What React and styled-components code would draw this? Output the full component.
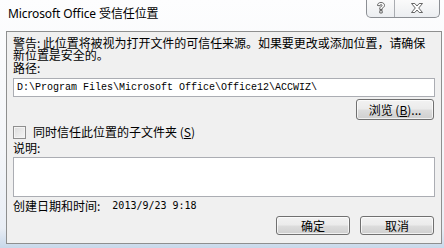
import React from 'react';
import styled, { createGlobalStyle } from 'styled-components';

const GlobalStyle = createGlobalStyle`
  html, body {
    margin: 0;
    padding: 0;
    width: 444px;
    height: 248px;
    overflow: hidden;
    background: #eef2f7;
  }
`;

const cjk = `"Noto Sans CJK SC", "Noto Sans", sans-serif`;

const Window = styled.div`
  width: 444px;
  height: 248px;
  display: flex;
  flex-direction: column;
  background: linear-gradient(180deg, #fdfdfe 0%, #f4f6f9 60%, #e9eef5 92%, #c8d8ea 100%);
  font-family: ${cjk};
  color: #000;
`;

const TitleBar = styled.div`
  height: 31px;
  display: flex;
  align-items: flex-start;
  justify-content: space-between;
  padding-left: 8px;
  padding-right: 4px;
`;

const Title = styled.div`
  font-family: "Noto Sans", "Noto Sans CJK SC", sans-serif;
  font-size: 12px;
  line-height: 14px;
  padding-top: 7px;
  letter-spacing: -0.1px;
`;

const CaptionGroup = styled.div`
  display: flex;
  height: 18px;
  margin-top: -1px;
  border: 1px solid #8c8f94;
  border-top: none;
  border-radius: 0 0 5px 5px;
  background: linear-gradient(180deg, #fbfbfb, #eceef1);
  overflow: hidden;
`;

const CaptionButton = styled.div`
  width: ${(p) => p.w}px;
  display: flex;
  align-items: center;
  justify-content: center;
  & + & {
    border-left: 1px solid #a9acb1;
  }
`;

const Panel = styled.div`
  flex: 1;
  margin: 0 2px 4px 6px;
  border: 1px solid #8e8f8f;
  background: #f0f0f0;
  padding: 5px 6px 0 6px;
  display: flex;
  flex-direction: column;
  font-size: 12px;
  line-height: 12px;
`;

const Text = styled.div`
  font-size: 12px;
  line-height: 12px;
  margin-top: ${(p) => p.mt || 0}px;
  white-space: nowrap;
`;

const Warning = styled.div`
  font-size: 12px;
  line-height: 12px;
  white-space: nowrap;
  letter-spacing: -0.05px;
`;

const Field = styled.div`
  height: 19px;
  margin-top: ${(p) => p.mt || 0}px;
  box-sizing: border-box;
  border: 1px solid #abadb3;
  background: #fff;
  font-family: "Liberation Mono", monospace;
  font-size: 10px;
  line-height: 17px;
  padding-left: 3px;
  color: #000;
`;

const Memo = styled(Field)`
  height: 40px;
`;

const Button = styled.div`
  box-sizing: border-box;
  width: ${(p) => p.w}px;
  height: ${(p) => p.h}px;
  border: 1px solid #707070;
  border-radius: 3px;
  background: linear-gradient(180deg, #f2f2f2 0%, #ebebeb 48%, #dddddd 52%, #cfcfcf 100%);
  box-shadow: inset 0 0 0 1px rgba(255, 255, 255, 0.7);
  display: flex;
  align-items: center;
  justify-content: center;
  font-size: 12px;
  line-height: 12px;
  & u {
    text-decoration: underline;
  }
`;

const ButtonRow = styled.div`
  display: flex;
  justify-content: flex-end;
  gap: ${(p) => p.gap || 0}px;
  margin-top: ${(p) => p.mt || 0}px;
  padding-right: 1px;
`;

const CheckRow = styled.div`
  display: flex;
  align-items: center;
  gap: 7px;
  margin-top: 5px;
  height: 14px;
  font-size: 12px;
  line-height: 12px;
`;

const Box = styled.div`
  width: 13px;
  height: 13px;
  box-sizing: border-box;
  border: 1px solid #8f8f8f;
  background: linear-gradient(135deg, #dcdcdc, #f6f6f6);
  box-shadow: inset 0 0 0 1px #f4f4f4;
`;

const DateRow = styled.div`
  display: flex;
  align-items: center;
  margin-top: 3px;
  font-size: 12px;
  line-height: 12px;
`;

const DateValue = styled.span`
  font-family: "DejaVu Sans Mono", monospace;
  font-size: 10px;
  margin-left: 12px;
`;

const HelpIcon = () => (
  <svg width="10" height="12" viewBox="0 0 10 12">
    <path
      d="M1.5 3.5 C1.5 1.5 3 0.5 5 0.5 C7 0.5 8.5 1.5 8.5 3.5 C8.5 5 7 5.6 6.2 6.2 L6.2 7.5 L3.8 7.5 L3.8 5.6 C4.6 4.8 6 4.6 6 3.5 C6 2.8 5.6 2.6 5 2.6 C4.3 2.6 4 3 4 3.8 Z M3.8 8.6 L6.2 8.6 L6.2 11 L3.8 11 Z"
      fill="#fff"
      stroke="#555"
      strokeWidth="0.9"
    />
  </svg>
);

const CloseIcon = () => (
  <svg width="12" height="10" viewBox="0 0 12 10">
    <path
      d="M0.5 0.5 L3.8 0.5 L6 3 L8.2 0.5 L11.5 0.5 L7.7 5 L11.5 9.5 L8.2 9.5 L6 7 L3.8 9.5 L0.5 9.5 L4.3 5 Z"
      fill="#fff"
      stroke="#555"
      strokeWidth="0.9"
      strokeLinejoin="round"
    />
  </svg>
);

const App = () => {
  return (
    <Window>
      <GlobalStyle />
      <TitleBar>
        <Title>Microsoft Office 受信任位置</Title>
        <CaptionGroup>
          <CaptionButton w={27}>
            <HelpIcon />
          </CaptionButton>
          <CaptionButton w={44}>
            <CloseIcon />
          </CaptionButton>
        </CaptionGroup>
      </TitleBar>

      <Panel>
        <Warning>
          警告: 此位置将被视为打开文件的可信任来源。如果要更改或添加位置，请确保
          <br />
          新位置是安全的。
        </Warning>
        <Text mt={1}>路径:</Text>
        <Field mt={4}>D:\Program Files\Microsoft Office\Office12\ACCWIZ\</Field>
        <ButtonRow mt={2}>
          <Button w={78} h={21}>
            浏览 (<u>B</u>)...
          </Button>
        </ButtonRow>

        <CheckRow>
          <Box />
          <span>同时信任此位置的子文件夹 (<u>S</u>)</span>
        </CheckRow>
        <Text mt={3}>说明:</Text>
        <Memo mt={3} />

        <DateRow>
          创建日期和时间:
          <DateValue>2013/9/23 9:18</DateValue>
        </DateRow>

        <ButtonRow mt={4} gap={10}>
          <Button w={74} h={19}>确定</Button>
          <Button w={74} h={19}>取消</Button>
        </ButtonRow>
      </Panel>
    </Window>
  );
};

export default App;
